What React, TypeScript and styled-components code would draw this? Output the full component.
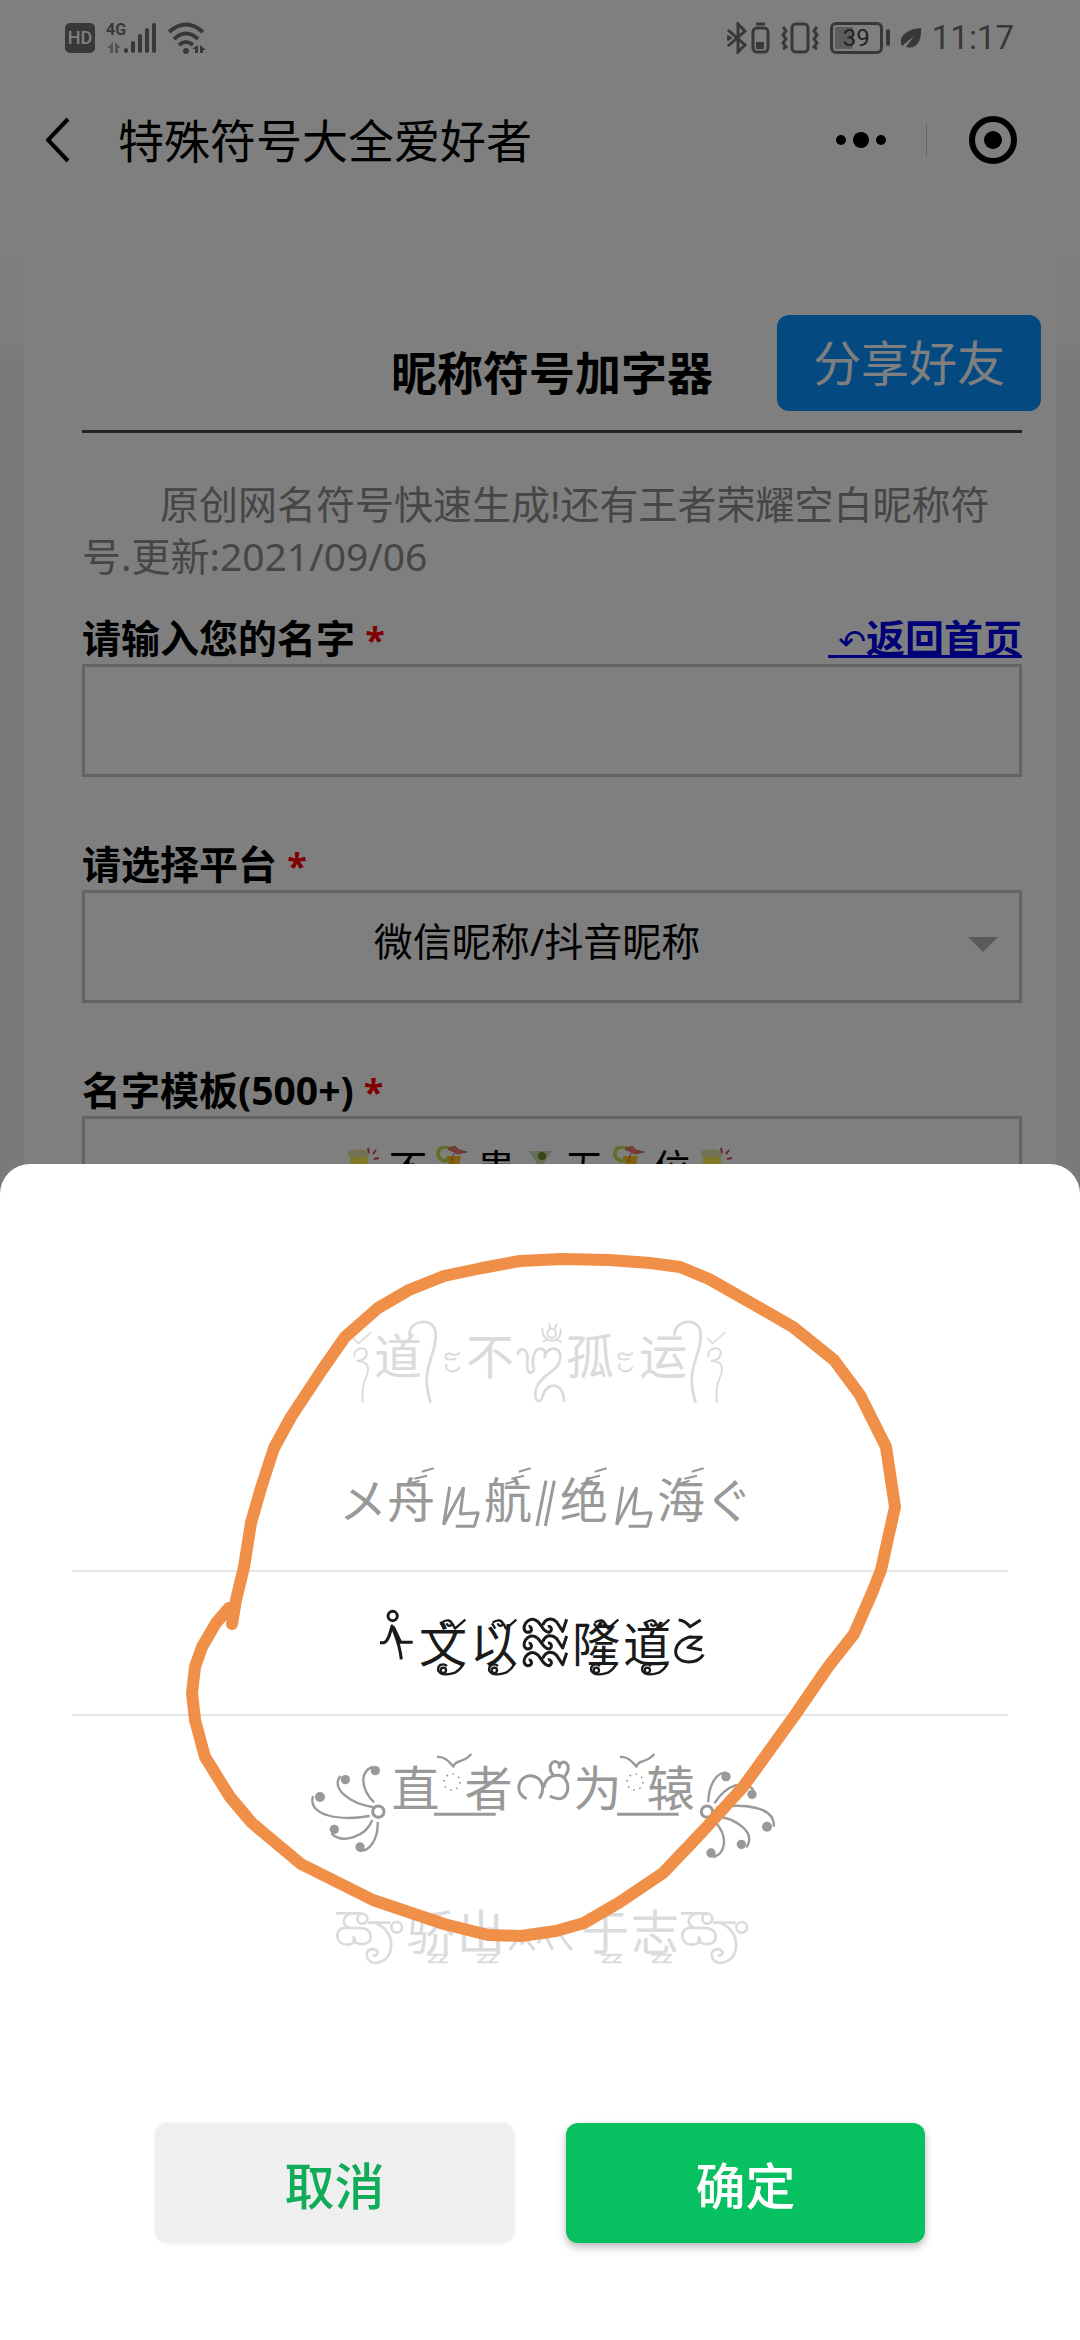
import React from "react";
import styled, { createGlobalStyle } from "styled-components";

const GlobalStyle = createGlobalStyle`
  *, *::before, *::after { box-sizing: border-box; }
  body {
    margin: 0;
    background: #fff;
    font-family: "Noto Sans", "Noto Sans CJK SC", sans-serif;
    color: #000;
  }
  button, input, select { font: inherit; color: inherit; margin: 0; }
`;

const Screen = styled.div`
  position: relative;
  min-height: 100vh;
  overflow: hidden;
`;

/* ---------- status bar ---------- */

const StatusBar = styled.div`
  display: flex;
  align-items: center;
  justify-content: space-between;
  height: 75px;
  padding: 0 66px 0 65px;
  color: #707070;
`;

const StatusGroup = styled.div<{ $gap: number }>`
  display: flex;
  align-items: center;
  gap: ${(p) => p.$gap}px;
  svg { display: block; flex: none; }
`;

const HdBadge = styled.span`
  width: 30px;
  height: 30px;
  border-radius: 5px;
  background: #707070;
  color: #fff;
  font: 500 18px/30px Roboto, sans-serif;
  text-align: center;
`;

const Signal = styled.div`
  display: flex;
  align-items: flex-end;
`;

const Network = styled.span`
  display: flex;
  flex-direction: column;
  height: 32px;
  width: 17px;
  font: 700 16px/16px Roboto, sans-serif;
  svg { margin: 4px 0 0 1px; }
`;

const Battery = styled.span`
  width: 53px;
  height: 32px;
  border: 3px solid #707070;
  border-radius: 6px;
  background: linear-gradient(90deg, #bbb 20px, transparent 20px);
  background-clip: content-box;
  padding: 2px;
  font: 400 24px/23px Roboto, sans-serif;
  text-align: center;
  color: #444;
`;

const BatteryTip = styled.span`
  width: 4px;
  height: 17px;
  border-radius: 2px;
  background: #707070;
`;

const Clock = styled.span`
  font: 400 33px/40px Roboto, sans-serif;
`;

/* ---------- navigation bar ---------- */

const NavBar = styled.header`
  display: flex;
  align-items: center;
  height: 130px;
  padding: 0 53px 0 36px;
`;

const IconButton = styled.button`
  display: grid;
  place-items: center;
  padding: 0 10px;
  border: 0;
  background: none;
  svg { display: block; }
`;

const NavTitle = styled.h1`
  flex: 1;
  margin: 0 0 0 38px;
  font-size: 46px;
  line-height: 60px;
  font-weight: 400;
`;

const NavDivider = styled.span`
  width: 1px;
  height: 34px;
  margin: 0 32px 0 30px;
  background: #cfcfcf;
`;

/* ---------- form card ---------- */

const Main = styled.main`
  margin-top: 53px;
  padding: 0 24px;
  background: linear-gradient(#fafafa 80px, #f4f4f4 100px);
`;

const Card = styled.section`
  position: relative;
  padding: 84px 34px 100px 58px;
  background: #fff;
`;

const CardTitle = styled.h2`
  margin: 0;
  padding-bottom: 28px;
  border-bottom: 3px solid #484848;
  font-size: 46px;
  line-height: 60px;
  text-align: center;
`;

const ShareButton = styled.button`
  position: absolute;
  top: 57px;
  right: 15px;
  padding: 15px 36px;
  border: 0;
  border-radius: 12px;
  background: #0892ff;
  color: #fff;
  font-size: 48px;
  line-height: 66px;
`;

const Intro = styled.p`
  margin: 45px 0 0;
  color: #8c8c8c;
  font-size: 39px;
  line-height: 52px;
  text-indent: 2em;
`;

const Field = styled.div<{ $space: number }>`
  margin-top: ${(p) => p.$space}px;
`;

const FieldHead = styled.div`
  display: flex;
  justify-content: space-between;
  height: 52px;
  font-size: 39px;
  line-height: 52px;
  font-weight: 700;
`;

const Star = styled.span`
  color: #f00;
  font-size: 36px;
`;

const HomeLink = styled.a`
  color: #0000ee;
  text-decoration: underline;
  text-decoration-thickness: 3px;
  text-decoration-skip-ink: none;
`;

const Turn = styled.span`
  font-family: "DejaVu Sans", sans-serif;
  font-size: 33px;
  font-weight: 400;
`;

const TextInput = styled.input`
  display: block;
  width: 100%;
  height: 113px;
  padding: 0 24px;
  border: 3px solid #c8c8c8;
  border-radius: 0;
  background: #fff;
  font-size: 39px;
`;

const SelectWrap = styled.div`
  position: relative;
  svg { position: absolute; right: 24px; top: 47px; }
`;

const Select = styled.select`
  display: block;
  width: 100%;
  height: 113px;
  padding: 0 54px 12px 24px;
  border: 3px solid #c8c8c8;
  border-radius: 0;
  background: #fff;
  appearance: none;
  font-size: 39px;
  text-align: center;
  text-align-last: center;
`;

const TemplateButton = styled.button`
  display: flex;
  align-items: center;
  justify-content: center;
  gap: 5px;
  width: 100%;
  height: 113px;
  padding: 0 24px 14px 0;
  border: 3px solid #c8c8c8;
  background: #fff;
  font-size: 39px;
`;

/* ---------- bottom sheet ---------- */

const Scrim = styled.div`
  position: absolute;
  inset: 0;
  background: rgba(0, 0, 0, 0.5);
`;

const Sheet = styled.div`
  position: absolute;
  left: 0;
  right: 0;
  bottom: 0;
  padding: 120px 0 97px;
  border-radius: 30px 30px 0 0;
  background: #fff;
`;

const Picker = styled.div`
  margin: 0 72px;
`;

const tones = ["#1a1a1a", "#999999", "#dbdbde"];

const PickerRow = styled.div<{ $distance: number; $gap?: number; $lead?: number }>`
  display: flex;
  align-items: center;
  justify-content: center;
  gap: ${(p) => p.$gap ?? 0}px;
  height: 144px;
  padding-left: ${(p) => p.$lead ?? 0}px;
  color: ${(p) => tones[p.$distance]};
  box-shadow: ${(p) => (p.$distance === 0 ? "0 -2px #e5e5e8, inset 0 -2px #e5e5e8" : "none")};
  font-size: 48px;
  line-height: 72px;
`;

const Drawing = styled.svg`
  display: block;
  flex: none;
  overflow: visible;
  fill: none;
  stroke: currentColor;
  stroke-width: 9;
  stroke-linejoin: round;
`;

const Glyph = styled.span`
  position: relative;
  ${Drawing} {
    position: absolute;
    left: 0;
    top: -12px;
  }
`;

const Actions = styled.div`
  display: flex;
  gap: 52px;
  padding: 0 155px;
  margin-top: 119px;
`;

const Action = styled.button<{ $primary?: boolean }>`
  flex: 1;
  height: 120px;
  padding: 0;
  border: 0;
  border-radius: 12px;
  font-size: 50px;
  font-weight: 500;
  background: ${(p) => (p.$primary ? "#07c160" : "#efefef")};
  color: ${(p) => (p.$primary ? "#fff" : "#10ac5a")};
  box-shadow: ${(p) => (p.$primary ? "0 4px 8px rgba(0, 0, 0, 0.28)" : "0 0 5px #efefef")};
`;

const Scribble = styled.svg`
  position: absolute;
  left: 0;
  top: 0;
  width: 100%;
  height: 100%;
  pointer-events: none;
`;

/* Ornaments are drawn on a grid three times finer than the page. */
function Ornament(p: { x: number; y: number; w: number; children: React.ReactNode }) {
  return (
    <Drawing aria-hidden="true" width={p.w} height={96} viewBox={`${p.x} ${p.y} ${p.w * 3} 288`}>
      {p.children}
    </Drawing>
  );
}

function Marked({ text, children }: { text: string; children: React.ReactNode }) {
  return (
    <Glyph>
      {text}
      <Ornament x={0} y={0} w={48}>{children}</Ornament>
    </Glyph>
  );
}

/* first row */
const Three = () => (
  <Ornament x={60} y={54} w={22}>
    <g strokeWidth={6}>
      <path d="M63 144L80 160L118 126" strokeWidth={5} />
      <path d="M68 202C60 176 100 165 104 186C106 204 92 212 76 213C110 213 114 236 102 262C88 290 91 320 92 338" />
    </g>
  </Ornament>
);
const Hook = () => (
  <Ornament x={270} y={54} w={19}>
    <path strokeWidth={8} d="M233 137C226 96 296 76 310 122C318 172 284 220 284 265C284 300 290 320 296 338" />
  </Ornament>
);
const Curls = () => (
  <Ornament x={327} y={54} w={25}>
    <g strokeWidth={6}>
      <path d="M383 187C378 198 362 196 352 190C338 190 336 206 350 208C360 209 368 208 373 206" />
      <path d="M346 222C336 234 350 246 364 244C374 242 380 238 382 230" />
    </g>
  </Ornament>
);
const Crown = () => (
  <Ornament x={546} y={54} w={52}>
    <g strokeWidth={8}>
      <path d="M557 194C560 170 590 172 586 210C582 250 596 256 606 240C598 214 604 176 626 176C642 178 640 190 638 204" />
      <path d="M638 204C640 168 690 164 685 206C680 246 626 252 612 296C604 338 626 342 632 320C640 276 696 270 696 336" />
      <path strokeWidth={6} d="M632 114C624 158 690 170 686 116M646 130C646 112 672 112 672 130C672 148 646 148 646 130M655 116L652 100M668 116L674 102" />
      <path strokeWidth={6} d="M632 156L646 148M688 156L672 148" />
    </g>
  </Ornament>
);

/* second row */
const Dashes = () => <path strokeWidth={6} d="M104 59L140 49M82 80L120 71M64 96L98 86" />;
const Zigzag = () => (
  <Ornament x={312} y={486} w={49}>
    <path strokeWidth={9} strokeLinejoin="bevel" d="M356 590L338 704L398 592L388 672L442 668L430 709H374" />
  </Ornament>
);
const Slashes = () => (
  <Ornament x={603} y={486} w={28}>
    <path d="M645 572L618 708M670 572L643 708" />
  </Ornament>
);

/* third row */
const Ribbon = () => (
  <g strokeWidth={7}>
    <path d="M66 82L76 98M68 80C84 68 96 74 98 82C96 94 84 90 84 82M92 74C100 82 106 92 108 98L139 71" />
    <circle cx={73} cy={223} r={8} />
    <path d="M58 226C54 206 72 200 84 210M58 224C66 240 92 236 108 230C122 222 128 214 134 203" />
  </g>
);
const Walker = () => (
  <Ornament x={92} y={-12} w={36}>
    <circle cx={130} cy={48} r={14} />
    <path d="M92 128H105C118 122 122 100 128 78C136 104 150 124 156 178M132 80L154 127H190" />
  </Ornament>
);
const Wave = ({ dy }: { dy: number }) => (
  <path d={`M556 ${62 + dy}C528 ${44 + dy} 504 ${90 + dy} 528 ${97 + dy}C546 ${98 + dy} 542 ${78 + dy} 532 ${80 + dy}M550 ${60 + dy}C570 ${64 + dy} 570 ${94 + dy} 592 ${97 + dy}C606 ${94 + dy} 600 ${76 + dy} 590 ${80 + dy}M574 ${76 + dy}C582 ${54 + dy} 602 ${52 + dy} 616 ${66 + dy}L634 ${94 + dy}L646 ${58 + dy}`} />
);
const Waves = () => (
  <Ornament x={509} y={-12} w={48}>
    <Wave dy={0} />
    <Wave dy={50} />
    <Wave dy={100} />
  </Ornament>
);
const Tail = () => (
  <Ornament x={968} y={-12} w={32}>
    <path d="M982 60C996 60 1004 66 1016 80L1048 60M1012 112H1050L1010 142L1052 150M1022 110C966 116 952 184 1012 186C1036 186 1048 176 1056 164" />
  </Ornament>
);

/* fourth row */
const SwirlLeft = () => (
  <Ornament x={18} y={0} w={86}>
    <circle cx={238} cy={215} r={17} />
    <g strokeWidth={7}>
      <path d="M225 187C188 150 178 96 222 80M224 202C150 190 96 146 124 108M212 228C120 244 24 226 42 168M220 240C200 290 130 314 97 280M236 246C238 290 216 336 180 332" />
    </g>
    <g fill="currentColor" stroke="none">
      <circle cx={229} cy={92} r={14} />
      <circle cx={139} cy={119} r={14} />
      <circle cx={63} cy={171} r={15} />
      <circle cx={106} cy={268} r={14} />
      <circle cx={183} cy={321} r={14} />
    </g>
  </Ornament>
);
const SwirlRight = () => (
  <Ornament x={1182} y={0} w={86}>
    <circle cx={1218} cy={215} r={17} />
    <g strokeWidth={7}>
      <path d="M1222 187C1222 140 1244 96 1276 98M1240 190C1280 130 1330 120 1358 150M1246 202C1330 190 1424 200 1418 260M1244 228C1310 236 1366 280 1336 322M1246 250C1280 290 1276 340 1236 352" />
    </g>
    <g fill="currentColor" stroke="none">
      <circle cx={1275} cy={110} r={14} />
      <circle cx={1353} cy={163} r={14} />
      <circle cx={1398} cy={260} r={15} />
      <circle cx={1321} cy={313} r={14} />
      <circle cx={1230} cy={339} r={14} />
    </g>
  </Ornament>
);
const Ring = () => (
  <Ornament x={420} y={0} w={25}>
    <path d="M414 51C434 48 448 60 463 80C468 58 494 70 517 42" strokeWidth={7} />
    <circle cx={459} cy={126} r={24} strokeWidth={5} strokeDasharray="5 14" />
    <path d="M405 223H590" strokeWidth={9} />
  </Ornament>
);
const Heart = () => (
  <Ornament x={639} y={0} w={61}>
    <path d="M680 176C640 158 656 106 692 107C730 110 736 150 718 176M732 142C734 114 760 104 776 106C814 112 812 176 776 176C764 176 756 172 750 168M764 108C742 92 750 62 768 65C778 68 778 74 778 82C778 68 790 62 800 70C808 80 804 96 794 110" />
  </Ornament>
);

/* fifth row */
const Zz = () => <path strokeWidth={6} d="M60 212H90L64 235H92M92 212H120L96 235H122" />;
const Knot = () => (
  <Ornament x={18} y={-18} w={69}>
    <g strokeWidth={8}>
      <path d="M18 70H96M60 72C36 80 34 106 60 114H40C14 118 14 164 52 164C76 162 80 148 68 138M68 148C80 168 122 168 122 142C122 120 106 114 88 114H60" />
      <circle cx={97} cy={86} r={15} />
      <path d="M114 98H182M138 100C176 116 188 150 182 178C176 216 130 230 114 208C104 186 116 174 134 178C150 186 142 200 128 196" />
      <circle cx={200} cy={112} r={16} />
    </g>
  </Ornament>
);
const Legs = () => (
  <Ornament x={528} y={-18} w={72}>
    <path d="M572 130L536 180M592 130L570 165M580 140L610 180M620 160L640 130L665 180M684 130L722 180" />
  </Ornament>
);

/* ---------- party icons of the template preview ---------- */

const Beer = () => (
  <svg width="39" height="39" viewBox="0 0 39 39" aria-hidden="true">
    <path d="M6 10h18v24H6z" fill="#fff04a" />
    <path d="M4 6q4-4 9-2 6-2 12 2v5H4z" fill="#e6e2ac" />
    <path d="M25 7l-1-5M29 8l3-4M30 13l5-1" stroke="#d9444e" strokeWidth="2" />
  </svg>
);
const Juice = () => (
  <svg width="39" height="39" viewBox="0 0 39 39" aria-hidden="true">
    <path d="M14 10h15l-3 14q-4 5-8 0zM20 24h4v12h-4z" fill="#ffc41e" />
    <path d="M16 14A7 7 0 1 1 19 4" fill="none" stroke="#bfe05a" strokeWidth="4" />
    <path d="M16 3l7-3 4 4 8 2-9 2zM22 7l-3 9" fill="#f0806a" stroke="#d9645e" />
  </svg>
);
const Martini = () => (
  <svg width="39" height="39" viewBox="0 0 39 39" aria-hidden="true">
    <path d="M8 5h23L20 21v12h-2V21z" fill="#cfdcae" />
    <circle cx="21" cy="10" r="4" fill="#6d8a2c" />
  </svg>
);

export default function App() {
  return (
    <Screen>
      <GlobalStyle />
      <StatusBar>
        <StatusGroup $gap={11}>
          <HdBadge>HD</HdBadge>
          <Signal>
            <Network>
              4G
              <svg width="14" height="11" viewBox="0 0 14 11" fill="#a8a8a8">
                <path d="M6 0v11H3V6H0zM8 0l6 6H11v5H8z" />
              </svg>
            </Network>
            <svg width="34" height="32" viewBox="0 0 34 32" stroke="#707070" strokeWidth="4" strokeLinecap="round">
              <path d="M3 29v-1M10 29v-8M17 29V14M24 29V8M31 29V3" />
            </svg>
          </Signal>
          <svg width="38" height="32" viewBox="0 0 38 32" fill="none" stroke="#707070" strokeWidth="4">
            <path d="M1 10Q18-5 35 10M6 17Q18 6 30 17M11 23Q18 17 25 23" />
            <circle cx="18" cy="29" r="3" fill="#707070" stroke="none" />
            <path d="M30 23v8h-3v-4h-3zM32 23l6 5h-3v3h-3z" fill="#707070" stroke="none" />
          </svg>
        </StatusGroup>
        <StatusGroup $gap={10}>
          <StatusGroup $gap={4}>
            <svg width="20" height="32" viewBox="0 0 20 32" fill="none" stroke="#707070" strokeWidth="3">
              <path d="M1 8l17 15-7 7V2l7 7L1 24M0 14l3 2-3 2" />
            </svg>
            <svg width="19" height="32" viewBox="0 0 19 32" fill="none" stroke="#707070" strokeWidth="3">
              <path d="M5 2h9" />
              <rect x="2" y="6" width="15" height="24" rx="4" />
              <path d="M5 20h8v7H5z" fill="#707070" stroke="none" />
            </svg>
          </StatusGroup>
          <svg width="40" height="32" viewBox="0 0 40 32" fill="none" stroke="#707070" strokeWidth="3">
            <rect x="12" y="2" width="16" height="28" rx="4" />
            <path d="M3 5l3 4-3 4 3 4-3 4 3 4-3 2M37 5l-3 4 3 4-3 4 3 4-3 4 3 2" />
          </svg>
          <StatusGroup $gap={3}>
            <Battery>39</Battery>
            <BatteryTip />
          </StatusGroup>
          <svg width="22" height="22" viewBox="0 0 22 22">
            <path d="M21 1C8 2-3 9 2 19L14 9L6 20C17 23 22 13 21 1z" fill="#707070" />
          </svg>
          <Clock>11:17</Clock>
        </StatusGroup>
      </StatusBar>

      <NavBar>
        <IconButton aria-label="返回">
          <svg width="24" height="46" viewBox="0 0 24 46" fill="none" stroke="#000" strokeWidth="4">
            <path d="M22 2L2 23l20 21" />
          </svg>
        </IconButton>
        <NavTitle>特殊符号大全爱好者</NavTitle>
        <IconButton aria-label="更多">
          <svg width="50" height="18" viewBox="0 0 50 18">
            <circle cx="5" cy="9" r="5" />
            <circle cx="25" cy="9" r="8" />
            <circle cx="45" cy="9" r="5" />
          </svg>
        </IconButton>
        <NavDivider />
        <IconButton aria-label="关闭">
          <svg width="48" height="48" viewBox="0 0 48 48">
            <circle cx="24" cy="24" r="21" fill="none" stroke="#000" strokeWidth="6" />
            <circle cx="24" cy="24" r="9" />
          </svg>
        </IconButton>
      </NavBar>

      <Main>
        <Card>
          <CardTitle>昵称符号加字器</CardTitle>
          <ShareButton>分享好友</ShareButton>
          <Intro>原创网名符号快速生成!还有王者荣耀空白昵称符号.更新:2021/09/06</Intro>
          <Field $space={30}>
            <FieldHead>
              <label htmlFor="name">
                请输入您的名字 <Star>*</Star>
              </label>
              <HomeLink href="#home">
                {"\u00a0"}
                <Turn>↶</Turn>返回首页
              </HomeLink>
            </FieldHead>
            <TextInput id="name" type="text" />
          </Field>
          <Field $space={61}>
            <FieldHead>
              <label htmlFor="platform">
                请选择平台 <Star>*</Star>
              </label>
            </FieldHead>
            <SelectWrap>
              <Select id="platform" defaultValue="wx">
                <option value="wx">微信昵称/抖音昵称</option>
              </Select>
              <svg width="30" height="15" viewBox="0 0 30 15" aria-hidden="true">
                <path d="M0 0h30L15 15z" fill="#b4b4b4" />
              </svg>
            </SelectWrap>
          </Field>
          <Field $space={61}>
            <FieldHead>
              <label htmlFor="template">
                名字模板(500+) <Star>*</Star>
              </label>
            </FieldHead>
            <TemplateButton id="template" aria-haspopup="listbox">
              <Beer />
              <span>不</span>
              <Juice />
              <span>患</span>
              <Martini />
              <span>无</span>
              <Juice />
              <span>位</span>
              <Beer />
            </TemplateButton>
          </Field>
        </Card>
      </Main>

      <Scrim />

      <Sheet role="dialog" aria-label="名字模板">
        <Picker role="listbox">
          <PickerRow role="option" $distance={2}>
            <Three />
            <span>道</span>
            <Hook />
            <Curls />
            <span>不</span>
            <Crown />
            <span>孤</span>
            <Curls />
            <span>运</span>
            <Hook />
            <Three />
          </PickerRow>
          <PickerRow role="option" $distance={1} $lead={12}>
            <span>メ</span>
            <Marked text="舟"><Dashes /></Marked>
            <Zigzag />
            <Marked text="航"><Dashes /></Marked>
            <Slashes />
            <Marked text="绝"><Dashes /></Marked>
            <Zigzag />
            <Marked text="海"><Dashes /></Marked>
            <span>ぐ</span>
          </PickerRow>
          <PickerRow role="option" aria-selected="true" $distance={0} $gap={3} $lead={6}>
            <Walker />
            <Marked text="文"><Ribbon /></Marked>
            <Marked text="以"><Ribbon /></Marked>
            <Waves />
            <Marked text="隆"><Ribbon /></Marked>
            <Marked text="道"><Ribbon /></Marked>
            <Tail />
          </PickerRow>
          <PickerRow role="option" $distance={1} $lead={6}>
            <SwirlLeft />
            <span>直</span>
            <Ring />
            <span>者</span>
            <Heart />
            <span>为</span>
            <Ring />
            <span>辕</span>
            <SwirlRight />
          </PickerRow>
          <PickerRow role="option" $distance={2} $gap={2} $lead={6}>
            <Knot />
            <Marked text="骄"><Zz /></Marked>
            <Marked text="出"><Zz /></Marked>
            <Legs />
            <Marked text="于"><Zz /></Marked>
            <Marked text="志"><Zz /></Marked>
            <Knot />
          </PickerRow>
        </Picker>
        <Actions>
          <Action>取消</Action>
          <Action $primary>确定</Action>
        </Actions>
        <Scribble viewBox="0 1164 1080 1176" aria-hidden="true">
          <path
            fill="none"
            stroke="#f09048"
            strokeWidth="12"
            strokeLinecap="round"
            strokeLinejoin="round"
            d="M232 1624L236 1600L244 1567L251 1523L261 1488L274 1448L291 1417L322 1370L345 1337L378 1308L409 1290L444 1276L482 1268L520 1261L562 1259L609 1260L650 1263L680 1267L709 1279L746 1300L793 1327L834 1360L860 1395L886 1447L895 1507L881 1570L872 1593L854 1634L828 1667L795 1715L743 1787L703 1831L663 1873L620 1902L584 1923L556 1931L521 1936L488 1935L444 1924L373 1900L301 1864L252 1823L230 1797L205 1757L195 1720L192 1693L195 1667L202 1647L216 1623L229 1608"
          />
        </Scribble>
      </Sheet>
    </Screen>
  );
}
